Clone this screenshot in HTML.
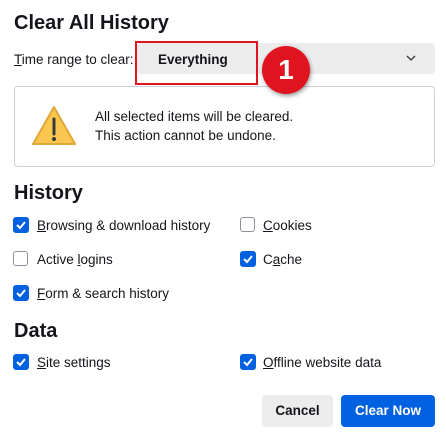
<!DOCTYPE html>
<html><head><style>
body{margin:0;width:446px;height:439px;background:#fff;font-family:"Liberation Sans","DejaVu Sans",sans-serif;color:#15141a;position:relative;overflow:hidden;font-size:13.5px}
.a{position:absolute;white-space:nowrap}
.cb{position:absolute;width:14px;height:14px;border-radius:3px;background:#0061e0;border:1px solid #0061e0}
.cb svg{position:absolute;left:1px;top:1px}
.un{background:#fff;border:1.5px solid #8f8f9d;width:13px;height:13px}
u{text-decoration:underline}
</style></head><body>
<div class="a" style="left:14px;top:12px;font-size:20px;font-weight:bold">Clear All History</div>
<div class="a" style="left:14px;top:52px"><u>T</u>ime range to clear:</div>
<div class="a" style="left:137px;top:43px;width:298px;height:31px;background:#ececec;border-radius:4px"></div>
<div class="a" style="left:158px;top:52px;font-weight:bold">Everything</div>
<svg class="a" style="left:405px;top:54px" width="12" height="8"><path d="M2 2l4 4 4-4" stroke="#333" stroke-width="1.3" fill="none"/></svg>
<div class="a" style="left:14px;top:86px;width:419px;height:79px;border:1px solid #cfcfd8;border-radius:4px"></div>
<div class="a" style="left:135px;top:41px;width:119px;height:40px;border:2px solid #e0141e"></div>
<div class="a" style="left:262px;top:46px;width:48px;height:48px;border-radius:50%;background:#e0141e;box-shadow:1px 2px 4px rgba(0,0,0,.4);color:#fff;font-weight:bold;font-size:28px;text-align:center;line-height:48px">1</div>
<svg class="a" style="left:31px;top:104px" width="46" height="44"><path d="M23 3L2 40h42z" fill="#f9c74f" stroke="#e0a83a" stroke-width="2" stroke-linejoin="round"/><path d="M23 15v15" stroke="#3a3a3a" stroke-width="3" stroke-linecap="round"/><circle cx="23" cy="35" r="2" fill="#3a3a3a"/></svg>
<div class="a" style="left:95px;top:109px">All selected items will be cleared.</div>
<div class="a" style="left:95px;top:128px">This action cannot be undone.</div>
<div class="a" style="left:14px;top:182px;font-size:20px;font-weight:bold">History</div>
<div class="cb" style="left:13px;top:217px"><svg width="12" height="12"><path d="M2 6l3 3 5-6" stroke="#fff" stroke-width="2" fill="none"/></svg></div>
<div class="a" style="left:37px;top:218px"><u>B</u>rowsing &amp; download history</div>
<div class="cb un" style="left:240px;top:217px"></div>
<div class="a" style="left:263px;top:218px"><u>C</u>ookies</div>
<div class="cb un" style="left:13px;top:251px"></div>
<div class="a" style="left:37px;top:252px">Active <u>l</u>ogins</div>
<div class="cb" style="left:240px;top:251px"><svg width="12" height="12"><path d="M2 6l3 3 5-6" stroke="#fff" stroke-width="2" fill="none"/></svg></div>
<div class="a" style="left:263px;top:252px">C<u>a</u>che</div>
<div class="cb" style="left:13px;top:285px"><svg width="12" height="12"><path d="M2 6l3 3 5-6" stroke="#fff" stroke-width="2" fill="none"/></svg></div>
<div class="a" style="left:37px;top:286px"><u>F</u>orm &amp; search history</div>
<div class="a" style="left:14px;top:320px;font-size:20px;font-weight:bold">Data</div>
<div class="cb" style="left:13px;top:354px"><svg width="12" height="12"><path d="M2 6l3 3 5-6" stroke="#fff" stroke-width="2" fill="none"/></svg></div>
<div class="a" style="left:37px;top:355px"><u>S</u>ite settings</div>
<div class="cb" style="left:240px;top:354px"><svg width="12" height="12"><path d="M2 6l3 3 5-6" stroke="#fff" stroke-width="2" fill="none"/></svg></div>
<div class="a" style="left:263px;top:355px"><u>O</u>ffline website data</div>
<div class="a" style="left:262px;top:395px;width:71px;height:32px;background:#ececec;border-radius:4px;font-weight:bold;text-align:center;line-height:32px">Cancel</div>
<div class="a" style="left:341px;top:395px;width:94px;height:32px;background:#0061e0;color:#fff;border-radius:4px;font-weight:bold;text-align:center;line-height:32px">Clear Now</div>
</body></html>
